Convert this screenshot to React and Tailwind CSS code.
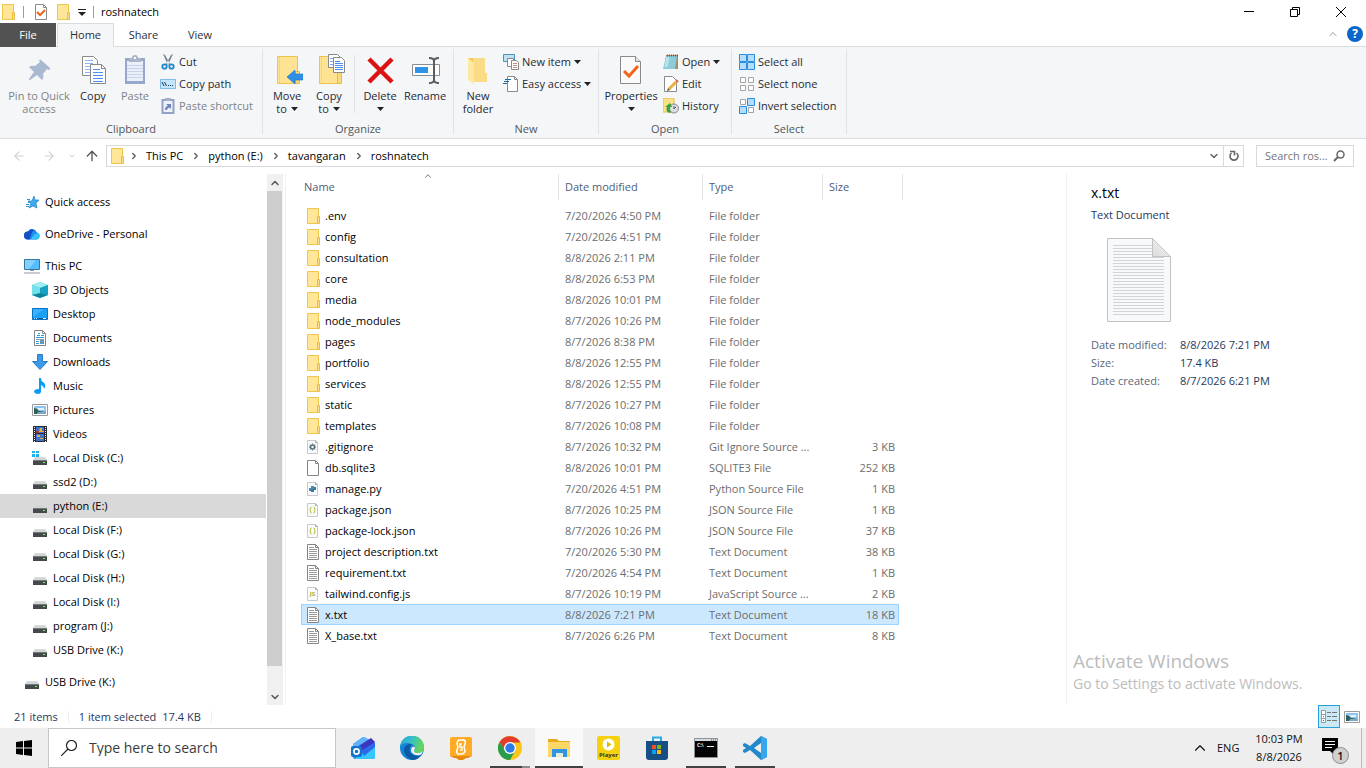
import { useState } from "react";
import { ChevronDown, ChevronRight, ChevronUp, ArrowLeft, ArrowRight, ArrowUp } from "lucide-react";

/* ---------- small icons ---------- */

function FolderIcon() {
  return (
    <svg width="14" height="16" viewBox="0 0 14 16" className="shrink-0">
      <path d="M.5.5h11v15H.5z" fill="#ffe699" stroke="#f0c54a" />
      <path d="M10.5 8.5h2v7h-2z" fill="#ffe08a" stroke="#e3bd47" />
    </svg>
  );
}

function PageIcon({ kind }) {
  const dark = kind === "text" || kind === "blank";
  return (
    <svg width="14" height="16" viewBox="0 0 14 16" className="shrink-0">
      <path
        d={dark ? "M.5.5h8l3 3v12H.5z" : "M.5 1.5h8l2 2v11H.5z"}
        fill={dark ? "#fff" : "#f8fafb"}
        stroke={dark ? "#858585" : "#c6cacd"}
      />
      <path d={dark ? "M8.5.5v3h3" : "M8.5 1.5v2h2"} fill="none" stroke={dark ? "#858585" : "#a9adb0"} />
      {kind === "text" && <path d="M2 3.5h5M2 5.5h8M2 7.5h8M2 9.5h8M2 11.5h8M2 13.5h8" stroke="#9a9a9a" />}
      {kind === "gear" && (
        <>
          <circle cx="5.5" cy="8" r="2" fill="none" stroke="#5b6f7b" strokeWidth="1.6" />
          <path d="M5.5 4.500v7M2 8h7" stroke="#5b6f7b" strokeDasharray="1 5" />
          <path d="M3 5.500l1 1M8 5.500l-1 1M3 10.500l1-1M8 10.500l-1-1" stroke="#5b6f7b" />
        </>
      )}
      {kind === "python" && (
        <>
          <path d="M4 5h3v3H4v2H2V7h2z" fill="#4b8bb0" />
          <path d="M4 11h3V9h2V6H7v2H4z" fill="#3b7799" />
        </>
      )}
      {kind === "json" && (
        <path
          d="M4.500 5q-1 0-1 1v1l-.8 1 .8 1v1q0 1 1 1M6.500 5q1 0 1 1v1l.8 1-.8 1v1q0 1-1 1"
          fill="none"
          stroke="#b9bd3e"
        />
      )}
      {kind === "js" && (
        <text x="5.5" y="10" fontSize="6" fontWeight="700" textAnchor="middle" fill="#a9ad2e">
          JS
        </text>
      )}
    </svg>
  );
}

function DriveIcon({ system }) {
  return (
    <svg width="16" height="16" viewBox="0 0 16 16" className="shrink-0">
      <path d="M3 7h10l2 3H1z" fill="#d4d7da" />
      {system && <path d="M0 1h3v2H0zM4 1h3v2H4zM0 4h3v3H0zM4 4h3v3H4z" fill="#19b5ea" />}
      <path d="M1 10h14v5H1z" fill="#45494c" />
      <path d="M1 10h14v1H1z" fill="#74797c" />
      <path d="M11 12h2v1h-2z" fill="#5dff5d" />
    </svg>
  );
}

function PictureIcon() {
  return (
    <svg width="16" height="16" viewBox="0 0 16 16" className="shrink-0">
      <path d="M.5 2.5h15v11H.5z" fill="#fff" stroke="#9b9b9b" />
      <path d="M2 4h12v8H2z" fill="#8fc4f0" />
      <path d="M5 6h7v2H7z" fill="#e6f3fd" />
      <path d="M2 6q3 0 5 3l7 1v2H2z" fill="#2f5f55" />
      <path d="M6 10h8v2H5z" fill="#7fa8c8" />
    </svg>
  );
}

function NavIcon({ name }) {
  if (name === "drive") return <DriveIcon />;
  if (name === "system") return <DriveIcon system />;
  if (name === "pictures") return <PictureIcon />;
  return (
    <svg width="16" height="16" viewBox="0 0 16 16" className="shrink-0">
      {name === "star" && (
        <>
          <path
            d="M10 2l1 4h4l-3 3 1 5-4-2-4 2 2-4-3-3h4z"
            fill="#3fa9ec"
            stroke="#1f84ca"
            strokeWidth=".7"
          />
          <path d="M3 5.5h3M4 8.5h2M2 10.5h3M2 12.5h3" stroke="#2b8fd4" />
        </>
      )}
      {name === "cloud" && (
        <>
          <path d="M4 13.500a4 4 0 010-8A5 5 0 0113 6.500a3.600 3.600 0 01-.5 7z" fill="#1f8df5" />
          <path d="M4 13.500A4 4 0 014 5.500Q7 2 10.500 4Q7 6 6 13.500z" fill="#1650c6" />
          <path d="M7 13.500Q10 7 14 7a3.500 3.500 0 01-1.500 6.500z" fill="#37c2fb" />
        </>
      )}
      {name === "pc" && (
        <>
          <path d="M.5 1.5h15v10H.5z" fill="#53bdfd" stroke="#37779d" />
          <path d="M1 2h11L5 11H1z" fill="#83d0ff" />
          <path d="M6 12.5h4M0 15h16" stroke="#8a98a8" />
        </>
      )}
      {name === "cube" && (
        <>
          <path d="M8 0l8 3v10l-8 3-8-3V3z" fill="#35c1d6" />
          <path d="M8 0l8 3-8 3-8-3z" fill="#a1edf1" />
          <path d="M0 3l8 3v6l-8 1z" fill="#74dfe9" />
          <path d="M8 6l8-3v10l-8-2z" fill="#16a2c5" />
          <path d="M0 13l8-2 8 2-8 3z" fill="#0d859c" />
        </>
      )}
      {name === "desktop" && (
        <>
          <path d="M.5 2.5h15v11H.5z" fill="#1aa0f5" stroke="#0873c4" />
          <path d="M12 3H1v8z" fill="#3cb2ff" />
          <path d="M1 12.5h14" stroke="#0a5f9f" />
          <path d="M2 12.5h1M4 12.5h1M11 12.5h3" stroke="#d9f0ff" />
        </>
      )}
      {name === "documents" && (
        <>
          <path d="M2.5.5h8l3 3v12h-11z" fill="#fff" stroke="#868686" />
          <path d="M10.5.5v3h3" fill="none" stroke="#868686" />
          <path d="M6 3.5h2M5 5.5h3M9 5.5h3M4 7.5h8M4 11.5h3M4 13.5h3" stroke="#2b9be0" />
          <path d="M4 9.5h8" stroke="#8d9aa5" />
          <path d="M8 10h4v4H8z" fill="#6a98b8" />
        </>
      )}
      {name === "downloads" && <path d="M5.5.5h5v7h5l-7.500 8-7.500-8h5z" fill="#3d9ae8" stroke="#2b7cc4" />}
      {name === "music" && (
        <path d="M7 0h2q0 3 2 4Q15 7 12 11q0-3-3-4v6q0 3-3 3t-4-2Q2 11 7 11z" fill="#0a9bf5" />
      )}
      {name === "videos" && (
        <>
          <path d="M1 0h14v16H1z" fill="#2c2c35" />
          <path d="M2.5 1v15M13.5 1v15" stroke="#eee" strokeDasharray="1 1" />
          <path d="M4 1h8v6H4zM4 8h8v7H4z" fill="#3d73c8" />
          <path d="M8 2h2v3h2v1H7zM5 9h3v2H5zM8 12h3v1H8z" fill="#e5b13c" />
          <path d="M4 5h3v2H4z" fill="#a63b2b" />
        </>
      )}
    </svg>
  );
}

function Caret() {
  return (
    <svg width="7" height="4" viewBox="0 0 7 4" className="inline-block shrink-0">
      <path d="M0 0h7L3.500 4z" fill="#222" />
    </svg>
  );
}

/* ---------- large ribbon icons ---------- */

function LargeIcon({ name }) {
  return (
    <svg width="32" height="32" viewBox="0 0 32 32" className="shrink-0">
      {name === "pin" && (
        <path
          d="M18 6l9 8q1 1-1 2l-2-1-4 5q1 4-1 6l-5-5-7 5H6v-1l5-7-5-5q2-2 6-1l5-4-1-2q1-1 2 0z"
          fill="#a9b9d1"
        />
      )}
      {name === "copy" && (
        <>
          <path d="M5.5 2.5h11l4 4v15h-15z" fill="#fff" stroke="#8a8a8a" />
          <path d="M8 6.5h8M8 9.5h8M8 12.5h8M8 15.5h8M8 18.5h8" stroke="#8ab6f4" />
          <path d="M13.5 10.5h11l4 4v15h-15z" fill="#fff" stroke="#8a8a8a" />
          <path d="M24.5 10.5v4h4" fill="none" stroke="#8a8a8a" />
          <path d="M16 15.5h7M16 18.5h10M16 21.5h10M16 24.5h10M16 27.5h10" stroke="#4a90f0" />
        </>
      )}
      {name === "paste" && (
        <>
          <path d="M6 4h20v26H6z" fill="#95a8cb" />
          <path d="M8 7h16v20H8z" fill="#eaf0fa" />
          <path d="M8 11.5h16M8 14.5h16M8 17.5h16M8 20.5h16M8 23.5h16" stroke="#c8d4ea" />
          <path d="M10 8V4h3q0-3 3-3t3 3h3v4z" fill="#aab5c6" />
          <path d="M15 3h2v2h-2z" fill="#fff" />
        </>
      )}
      {(name === "move" || name === "copyto") && (
        <>
          <path d="M6.5 2.5h20v27h-20z" fill="#ffe395" stroke="#efc44d" />
          <path d="M8.5 3v26" stroke="#f6d576" />
          <path d="M24.5 17.5h4v12h-4z" fill="#fbd978" stroke="#e5bb45" />
        </>
      )}
      {name === "move" && <path d="M16 23l8-7v4h8v6h-8v4z" fill="#2e8fe6" stroke="#1e76c6" strokeWidth=".6" />}
      {name === "copyto" && (
        <>
          <path d="M15.5.5h9l3 3v10h-12z" fill="#fff" stroke="#8a8a8a" />
          <path d="M17 4.5h7M17 7.5h7M17 10.5h3" stroke="#77aaf0" />
          <path d="M20.5 3.5h8l3 3v12h-11z" fill="#fff" stroke="#8a8a8a" />
          <path d="M22 7.5h5M22 9.5h8M22 11.5h8M22 13.5h8M22 15.5h8" stroke="#4a90f0" />
        </>
      )}
      {name === "delete" && <path d="M5 5l23 23M28 5L5 28" stroke="#dc1313" strokeWidth="4.5" />}
      {name === "rename" && (
        <>
          <path d="M3.5 10.5h27v11h-27z" fill="#fff" stroke="#8d8d8d" />
          <path d="M6 13h13v6H6z" fill="#2f94e8" />
          <path
            d="M20 4q5 0 5 3v19q0 3-5 3M30 4q-5 0-5 3v19q0 3 5 3"
            fill="none"
            stroke="#5c5c5c"
            strokeWidth="2"
          />
        </>
      )}
      {name === "folder" && (
        <>
          <path d="M6 4h17v15h2v9H10z" fill="#f3c95c" />
          <path d="M11 4h12v15h2v9H11z" fill="#fadc85" />
          <path d="M6 4l6 5v22l-4-4-2-1z" fill="#ffe7a4" />
        </>
      )}
      {name === "properties" && (
        <>
          <path d="M5.5 2.5h15l5 5v22h-20z" fill="#fafafa" stroke="#8a8a8a" />
          <path d="M20.5 2.5v5h5" fill="#e6e6e6" stroke="#8a8a8a" />
          <path d="M9 17l5 5 9-10" fill="none" stroke="#f2641b" strokeWidth="3" />
        </>
      )}
    </svg>
  );
}

function SmallIcon({ name }) {
  return (
    <svg width="16" height="16" viewBox="0 0 16 16" className="shrink-0">
      {name === "cut" && (
        <>
          <path d="M3 0l2 1 5 9-2 1zM13 0l-2 1-5 9 2 1z" fill="#74838f" />
          <circle cx="4.500" cy="12.500" r="2.200" fill="none" stroke="#1c87c9" strokeWidth="1.800" />
          <circle cx="11.500" cy="12.500" r="2.200" fill="none" stroke="#1c87c9" strokeWidth="1.800" />
        </>
      )}
      {name === "path" && (
        <>
          <path d="M.5 3.5h15v9H.5z" fill="#c4e5fb" stroke="#7fbbe3" />
          <path d="M2 6l2 4M4.500 6l2 4M8 9.5h1M10 9.5h1M12 9.5h1" stroke="#20394c" />
        </>
      )}
      {name === "shortcut" && (
        <>
          <path d="M2.500 2h11v13h-11z" fill="#edf2fa" stroke="#91a2c4" strokeWidth="2" />
          <path d="M5 0h6v3H5z" fill="#a5b0c5" />
          <path d="M5 12q0-4 3-4L6 6h5v5L9.500 9.500Q7 10 7 12z" fill="#7185b5" />
        </>
      )}
      {name === "newitem" && (
        <>
          <path d="M.5.5h11v7H.5z" fill="#bfe0f2" stroke="#4d93b8" />
          <path d="M4.5 4.5h6v8h-6z" fill="#fff" stroke="#8a8a8a" />
          <path d="M8.5 6.5h5l2 2v7h-7z" fill="#fff" stroke="#8a8a8a" />
          <path d="M10 9.5h4M10 11.5h4M10 13.5h4" stroke="#c58c7c" />
        </>
      )}
      {name === "easy" && (
        <>
          <path d="M4.5.5h7l3 3v12h-10z" fill="#fff" stroke="#8a8a8a" />
          <path d="M11.5.5v3h3" fill="none" stroke="#8a8a8a" />
          <path d="M2 3.5h6M1 5.5h5M0 7.5h4" stroke="#1c6aa4" />
        </>
      )}
      {name === "open" && (
        <>
          <path d="M3 1h12v14H2z" fill="#a58e60" />
          <path d="M3 2h11l-2 13H0z" fill="#8ccbd9" />
          <path d="M5 3l-2 10" stroke="#b9e4ed" strokeWidth="3" />
          <path d="M4 1.5h11" stroke="#53656a" strokeWidth="2" strokeDasharray="1 1" />
        </>
      )}
      {name === "edit" && (
        <>
          <path d="M1.5.5h8l4 4v11h-12z" fill="#fff" stroke="#8a8a8a" />
          <path d="M6 13l7-7" stroke="#eab13e" strokeWidth="3" />
          <path d="M4 15l1-3 2 2z" fill="#554" />
          <path d="M13 4l2 2" stroke="#db6155" strokeWidth="2" />
        </>
      )}
      {name === "history" && (
        <>
          <path d="M0 0h11v14H0z" fill="#fbe08a" stroke="#e5bd4c" />
          <circle cx="11" cy="10.500" r="4.500" fill="#d9dfe2" stroke="#808a91" />
          <path d="M11 8v3l2-2" fill="none" stroke="#555" />
          <path d="M7 15Q2 14 4 9H2l5-4 2 4H7q-1 3 1 5z" fill="#38a33b" />
        </>
      )}
      {name === "all" && (
        <path d="M.5.5h7v7h-7zM8.5.5h7v7h-7zM.5 8.5h7v7h-7zM8.5 8.5h7v7h-7z" fill="#b5dcfb" stroke="#278ee2" />
      )}
      {name === "none" && (
        <path d="M1.5 1.5h5v5h-5zM9.5 1.5h5v5h-5zM1.5 9.5h5v5h-5zM9.5 9.5h5v5h-5z" fill="#fff" stroke="#a5a5a5" />
      )}
      {name === "invert" && (
        <>
          <path d="M8.5.5h7v7h-7zM.5 8.5h7v7h-7z" fill="#b5dcfb" stroke="#278ee2" />
          <path d="M1.5 1.5h5v5h-5zM9.5 9.5h5v5h-5z" fill="#fff" stroke="#a5a5a5" />
        </>
      )}
    </svg>
  );
}

/* ---------- ribbon ---------- */

function BigButton({ icon, lines, caret, disabled, className }) {
  return (
    <button
      type="button"
      disabled={disabled}
      className={`flex flex-col items-center pt-[7px] leading-[13px] whitespace-nowrap ${
        disabled ? "text-[#7d838a]" : "text-[#262a33]"
      } ${className}`}
    >
      <LargeIcon name={icon} />
      <span className="mt-[3px]">{lines[0]}</span>
      <span className="flex h-[13px] items-center gap-1">
        {lines[1]}
        {caret && <Caret />}
      </span>
    </button>
  );
}

function SmallButton({ icon, label, caret, disabled }) {
  return (
    <button
      type="button"
      disabled={disabled}
      className={`flex h-[22px] items-center gap-[3px] whitespace-nowrap ${
        disabled ? "text-[#7d838a]" : "text-[#262a33]"
      }`}
    >
      <SmallIcon name={icon} />
      {label}
      {caret && <Caret />}
    </button>
  );
}

function Group({ label, className, children }) {
  return (
    <section className={`flex shrink-0 flex-col ${className}`}>
      <div className="flex flex-1">{children}</div>
      <div className="mb-px h-4 text-center leading-4 text-[#505660]">{label}</div>
    </section>
  );
}

const Divider = () => <div className="mt-[2px] mb-1 w-px shrink-0 bg-[#e0e2e4]" />;

function Ribbon() {
  return (
    <div className="flex h-[93px] overflow-hidden border-y border-[#dadbdc] bg-[#f5f6f7]">
      <Group label="Clipboard" className="w-[262px]">
        <BigButton icon="pin" lines={["Pin to Quick", "access"]} disabled className="ml-[3px] w-[72px]" />
        <BigButton icon="copy" lines={["Copy"]} className="w-9" />
        <BigButton icon="paste" lines={["Paste"]} disabled className="w-12" />
        <div className="flex flex-col items-start pt-1 pl-px">
          <SmallButton icon="cut" label="Cut" />
          <SmallButton icon="path" label="Copy path" />
          <SmallButton icon="shortcut" label="Paste shortcut" disabled />
        </div>
      </Group>
      <Divider />
      <Group label="Organize" className="w-[190px]">
        <BigButton icon="move" lines={["Move", "to"]} caret className="ml-[3px] w-[42px]" />
        <BigButton icon="copyto" lines={["Copy", "to"]} caret className="w-[42px]" />
        <div className="mx-1 my-2 w-px bg-[#e0e2e4]" />
        <BigButton icon="delete" lines={["Delete"]} caret className="w-[42px]" />
        <BigButton icon="rename" lines={["Rename"]} className="w-12" />
      </Group>
      <Divider />
      <Group label="New" className="w-36">
        <BigButton icon="folder" lines={["New", "folder"]} className="ml-1 w-10" />
        <div className="flex flex-col items-start pt-1 pl-[5px]">
          <SmallButton icon="newitem" label="New item" caret />
          <SmallButton icon="easy" label="Easy access" caret />
        </div>
      </Group>
      <Divider />
      <Group label="Open" className="w-[132px]">
        <BigButton icon="properties" lines={["Properties"]} caret className="ml-1 w-14" />
        <div className="flex flex-col items-start pt-1 pl-1">
          <SmallButton icon="open" label="Open" caret />
          <SmallButton icon="edit" label="Edit" />
          <SmallButton icon="history" label="History" />
        </div>
      </Group>
      <Divider />
      <Group label="Select" className="w-[114px]">
        <div className="flex flex-col items-start pt-1 pl-[7px]">
          <SmallButton icon="all" label="Select all" />
          <SmallButton icon="none" label="Select none" />
          <SmallButton icon="invert" label="Invert selection" />
        </div>
      </Group>
      <Divider />
    </div>
  );
}

function TitleBar() {
  return (
    <header className="flex h-[23px] items-center justify-between">
      <div className="flex items-center pl-[2px]">
        <FolderIcon />
        <span className="ml-[7px] h-3 w-px bg-[#9a9a9a]" />
        <button type="button" aria-label="Properties" className="ml-[10px]">
          <svg width="14" height="16" viewBox="0 0 14 16">
            <path d="M1.5.5h8l3 3v12h-11z" fill="#fff" stroke="#8c8c8c" />
            <path d="M9.5.5v3h3" fill="none" stroke="#8c8c8c" />
            <path d="M3 8l3 3 5-5" fill="none" stroke="#f2641b" strokeWidth="2" />
          </svg>
        </button>
        <button type="button" aria-label="New folder" className="ml-[9px]">
          <FolderIcon />
        </button>
        <button type="button" aria-label="Customize toolbar" className="ml-[7px]">
          <svg width="8" height="8" viewBox="0 0 8 8">
            <path d="M0 1.5h8" stroke="#222" />
            <path d="M0 4h8L4 8z" fill="#222" />
          </svg>
        </button>
        <span className="ml-[7px] h-3 w-px bg-[#9a9a9a]" />
        <h1 className="ml-[7px]">roshnatech</h1>
      </div>
      <div className="flex h-5 pr-[2px]">
        <button type="button" aria-label="Minimize" className="grid w-[46px] place-items-center">
          <svg width="10" height="10">
            <path d="M0 4.5h10" stroke="#000" />
          </svg>
        </button>
        <button type="button" aria-label="Restore" className="grid w-[46px] place-items-center">
          <svg width="10" height="10">
            <path d="M.5 2.5h7v7h-7zM2.5 2V.5h7v7H8" fill="none" stroke="#000" />
          </svg>
        </button>
        <button type="button" aria-label="Close" className="grid w-[46px] place-items-center">
          <svg width="10" height="10">
            <path d="M0 0l10 10M10 0L0 10" stroke="#000" />
          </svg>
        </button>
      </div>
    </header>
  );
}

function Tabs() {
  return (
    <nav className="relative z-10 -mb-px flex h-6 items-stretch text-[#2b3038]">
      <button type="button" className="w-14 bg-[#525252] text-white">
        File
      </button>
      <button type="button" className="ml-px w-[57px] border border-b-0 border-[#dadbdc] bg-[#f5f6f7] pb-[2px]">
        Home
      </button>
      <button type="button" className="w-[59px]">
        Share
      </button>
      <button type="button" className="w-[54px]">
        View
      </button>
      <div className="ml-auto flex items-center gap-2 pr-[3px] pb-[2px]">
        <ChevronUp size={12} className="text-[#999]" />
        <button
          type="button"
          aria-label="Help"
          className="grid size-4 place-items-center rounded-full bg-[#0a66c8] text-[12px] font-bold text-white"
        >
          ?
        </button>
      </div>
    </nav>
  );
}

function AddressBar() {
  const crumbs = ["This PC", "python (E:)", "tavangaran", "roshnatech"];
  return (
    <div className="flex h-[35px] items-center pr-3 pb-px">
      <div className="flex w-[106px] shrink-0 items-center pl-3">
        <button type="button" aria-label="Back">
          <ArrowLeft size={14} className="text-[#d0d0d0]" />
        </button>
        <button type="button" aria-label="Forward" className="ml-4">
          <ArrowRight size={14} className="text-[#d0d0d0]" />
        </button>
        <button type="button" aria-label="Recent" className="ml-3">
          <ChevronDown size={8} strokeWidth={3} className="text-[#c8c8c8]" />
        </button>
        <button type="button" aria-label="Up" className="ml-2">
          <ArrowUp size={16} className="text-[#555]" />
        </button>
      </div>
      <div className="flex h-[22px] flex-1 items-center border border-[#d9d9d9] pl-1">
        <FolderIcon />
        {crumbs.map((c) => (
          <span key={c} className="flex items-center">
            <ChevronRight size={10} className="mx-1 text-[#555]" strokeWidth={3} />
            <a href="#" className="pr-1 pl-[3px] leading-5">
              {c}
            </a>
          </span>
        ))}
        <button type="button" aria-label="Previous locations" className="ml-auto px-[3px]">
          <ChevronDown size={12} strokeWidth={3} className="text-[#666]" />
        </button>
        <button
          type="button"
          aria-label="Refresh"
          className="grid h-full w-5 place-items-center border-l border-[#d9d9d9]"
        >
          <svg width="12" height="12" viewBox="0 0 12 12">
            <path d="M8.500 3a4 4 0 11-5 0" fill="none" stroke="#666" strokeWidth="1.600" />
            <path d="M2 1.500h4.500v4" fill="none" stroke="#666" strokeWidth="1.600" />
          </svg>
        </button>
      </div>
      <label className="ml-3 flex h-[22px] w-[98px] items-center border border-[#d9d9d9] pl-2">
        <input
          aria-label="Search roshnatech"
          placeholder="Search ros..."
          className="w-[68px] outline-none placeholder:text-[#767676]"
        />
        <svg width="12" height="12" viewBox="0 0 12 12">
          <circle cx="7.500" cy="4.500" r="3.500" fill="none" stroke="#666" strokeWidth="1.500" />
          <path d="M5 7l-4 4" stroke="#666" strokeWidth="2" />
        </svg>
      </label>
    </div>
  );
}

/* ---------- navigation pane ---------- */

const drives = [
  ["3D Objects", "cube"],
  ["Desktop", "desktop"],
  ["Documents", "documents"],
  ["Downloads", "downloads"],
  ["Music", "music"],
  ["Pictures", "pictures"],
  ["Videos", "videos"],
  ["Local Disk (C:)", "system"],
  ["ssd2 (D:)", "drive"],
  ["python (E:)", "drive"],
  ["Local Disk (F:)", "drive"],
  ["Local Disk (G:)", "drive"],
  ["Local Disk (H:)", "drive"],
  ["Local Disk (I:)", "drive"],
  ["program (J:)", "drive"],
  ["USB Drive (K:)", "drive"],
];

function NavItem({ label, icon, child, active }) {
  return (
    <a
      href="#"
      className={`flex h-6 shrink-0 items-center gap-[5px] ${child ? "pl-8" : "pl-6"} ${active ? "bg-[#d9d9d9]" : ""}`}
    >
      <NavIcon name={icon} />
      {label}
    </a>
  );
}

function Sidebar() {
  return (
    <aside className="flex w-[286px] shrink-0 border-r border-[#f0f0f0]">
      <nav className="flex flex-1 flex-col gap-2 overflow-hidden pt-4">
        <NavItem label="Quick access" icon="star" />
        <NavItem label="OneDrive - Personal" icon="cloud" />
        <div>
          <NavItem label="This PC" icon="pc" />
          {drives.map(([label, icon]) => (
            <NavItem key={label} label={label} icon={icon} child active={label === "python (E:)"} />
          ))}
        </div>
        <NavItem label="USB Drive (K:)" icon="drive" />
      </nav>
      <div className="mr-[2px] ml-px flex w-4 flex-col bg-[#f0f0f0]">
        <button type="button" aria-label="Scroll up" className="grid h-[17px] place-items-center">
          <ChevronUp size={12} strokeWidth={3} className="text-[#555]" />
        </button>
        <div className="mr-px flex-1 bg-[#cdcdcd]" />
        <div className="h-[22px]" />
        <button type="button" aria-label="Scroll down" className="grid h-[17px] place-items-center">
          <ChevronDown size={12} strokeWidth={3} className="text-[#555]" />
        </button>
      </div>
    </aside>
  );
}

/* ---------- file list ---------- */

const files = [
  [".env", "7/20/2026 4:50 PM", "File folder", "", "folder"],
  ["config", "7/20/2026 4:51 PM", "File folder", "", "folder"],
  ["consultation", "8/8/2026 2:11 PM", "File folder", "", "folder"],
  ["core", "8/8/2026 6:53 PM", "File folder", "", "folder"],
  ["media", "8/8/2026 10:01 PM", "File folder", "", "folder"],
  ["node_modules", "8/7/2026 10:26 PM", "File folder", "", "folder"],
  ["pages", "8/7/2026 8:38 PM", "File folder", "", "folder"],
  ["portfolio", "8/8/2026 12:55 PM", "File folder", "", "folder"],
  ["services", "8/8/2026 12:55 PM", "File folder", "", "folder"],
  ["static", "8/7/2026 10:27 PM", "File folder", "", "folder"],
  ["templates", "8/7/2026 10:08 PM", "File folder", "", "folder"],
  [".gitignore", "8/7/2026 10:32 PM", "Git Ignore Source ...", "3 KB", "gear"],
  ["db.sqlite3", "8/8/2026 10:01 PM", "SQLITE3 File", "252 KB", "blank"],
  ["manage.py", "7/20/2026 4:51 PM", "Python Source File", "1 KB", "python"],
  ["package.json", "8/7/2026 10:25 PM", "JSON Source File", "1 KB", "json"],
  ["package-lock.json", "8/7/2026 10:26 PM", "JSON Source File", "37 KB", "json"],
  ["project description.txt", "7/20/2026 5:30 PM", "Text Document", "38 KB", "text"],
  ["requirement.txt", "7/20/2026 4:54 PM", "Text Document", "1 KB", "text"],
  ["tailwind.config.js", "8/7/2026 10:19 PM", "JavaScript Source ...", "2 KB", "js"],
  ["x.txt", "8/8/2026 7:21 PM", "Text Document", "18 KB", "text"],
  ["X_base.txt", "8/7/2026 6:26 PM", "Text Document", "8 KB", "text"],
];

function FileList() {
  const [selected, setSelected] = useState("x.txt");

  return (
    <main className="min-w-0 flex-1 overflow-hidden pl-[15px]">
      <table className="w-[602px] table-fixed border-separate border-spacing-0 text-left">
        <colgroup>
          <col className="w-[258px]" />
          <col className="w-36" />
          <col className="w-[120px]" />
          <col className="w-[76px]" />
          <col className="w-1" />
        </colgroup>
        <thead className="text-[#4c607a]">
          <tr className="h-[26px]">
            <th className="relative border-r border-[#e5e5e5] p-0 pl-[3px] font-normal">
              Name
              <ChevronUp size={10} className="absolute -top-[3px] left-[122px] text-[#555]" />
            </th>
            <th className="border-r border-[#e5e5e5] p-0 pl-[6px] font-normal">Date modified</th>
            <th className="border-r border-[#e5e5e5] p-0 pl-[6px] font-normal">Type</th>
            <th colSpan={2} className="border-r border-[#e5e5e5] p-0 pl-[6px] font-normal">
              Size
            </th>
          </tr>
        </thead>
        <tbody>
          <tr className="h-[5px]">
            <td colSpan={5} className="p-0" />
          </tr>
          {files.map(([name, date, type, size, kind]) => {
            const cell =
              name === selected ? "border-y border-[#99d1ff] bg-[#cce8ff]" : "border-y border-transparent";
            return (
              <tr key={name} onClick={() => setSelected(name)} className="h-[21px] leading-4 text-[#6d6d6d]">
                <td className={`${cell} border-l p-0 pl-[5px] text-black`}>
                  <div className="flex items-center gap-1">
                    {kind === "folder" ? <FolderIcon /> : <PageIcon kind={kind} />}
                    {name}
                  </div>
                </td>
                <td className={`${cell} p-0 pl-[6px]`}>{date}</td>
                <td className={`${cell} p-0 pl-[6px] whitespace-nowrap`}>{type}</td>
                <td className={`${cell} border-r p-0 pr-[3px] text-right`}>{size}</td>
                <td className="p-0" />
              </tr>
            );
          })}
        </tbody>
      </table>
    </main>
  );
}

function Preview() {
  const lines = Array.from({ length: 24 }, (_, i) => 7.5 + i * 3);
  return (
    <aside className="relative w-[300px] shrink-0 border-l border-[#f0f0f0] pt-2 pl-6 text-[#1e395b]">
      <h2 className="text-[14px] leading-[22px] text-black">x.txt</h2>
      <p className="leading-[22px]">Text Document</p>
      <svg width="64" height="84" viewBox="0 0 64 84" className="mt-3 ml-4">
        <defs>
          <linearGradient id="fold" x1="0" y1="1" x2="1" y2="0">
            <stop offset="0" stopColor="#dcdcdc" />
            <stop offset="1" stopColor="#f4f4f4" />
          </linearGradient>
        </defs>
        <path d="M.5.5h45l18 18v65H.5z" fill="#f7f9fa" stroke="#bfc3c5" />
        {lines.map((y) => (
          <path key={y} d={`M6 ${y}h${y < 19 ? 39 : 51}`} stroke="#d2d5d7" />
        ))}
        <path d="M45.5.5v18h18z" fill="url(#fold)" stroke="#bfc3c5" />
      </svg>
      <dl className="mt-[14px] grid grid-cols-[89px_1fr] leading-[18px]">
        <dt className="text-[#5a6779]">Date modified:</dt>
        <dd>8/8/2026 7:21 PM</dd>
        <dt className="text-[#5a6779]">Size:</dt>
        <dd>17.4 KB</dd>
        <dt className="text-[#5a6779]">Date created:</dt>
        <dd>8/7/2026 6:21 PM</dd>
      </dl>
      {/* watermark floats over the pane */}
      <div className="pointer-events-none absolute bottom-[10px] left-[6px] whitespace-nowrap text-[#bcbcbc]">
        <p className="text-[19px] leading-6">Activate Windows</p>
        <p className="text-[14px] leading-[22px]">Go to Settings to activate Windows.</p>
      </div>
    </aside>
  );
}

function StatusBar() {
  return (
    <footer className="flex h-[23px] items-center pl-[14px] text-[#1e395b]">
      <span>21 items</span>
      <span className="ml-[10px] h-3 w-px bg-[#eee]" />
      <span className="ml-[10px]">1 item selected</span>
      <span className="ml-[6px]">17.4 KB</span>
      <span className="ml-[10px] h-3 w-px bg-[#eee]" />
      <div className="ml-auto flex h-full items-center gap-1 pr-[6px]">
        <button
          type="button"
          aria-label="Details"
          className="grid h-full w-[22px] place-items-center border border-[#26a0da] bg-[#cbe8f6]"
        >
          <svg width="16" height="13" viewBox="0 0 16 13">
            <path d="M.5.5h4v12h-4zM.5 4.5h4M.5 8.5h4" fill="#fff" stroke="#999" />
            <path d="M2 6.5h1" stroke="#2b7cd0" />
            <path d="M2 10.5h1" stroke="#d02b2b" />
            <path d="M6 2.5h4M11 2.5h5M6 6.5h4M11 6.5h5M6 10.5h4M11 10.5h5" stroke="#777" />
          </svg>
        </button>
        <button type="button" aria-label="Large icons">
          <PictureIcon />
        </button>
      </div>
    </footer>
  );
}

/* ---------- taskbar ---------- */

function AppIcon({ name }) {
  return (
    <svg width="24" height="24" viewBox="0 0 24 24">
      {name === "outlook" && (
        <>
          <path d="M2 8L12 1l3 1 9 6v13q0 2-2 2H4q-2 0-2-2z" fill="#2b8cf0" />
          <path d="M2 8L13 1l6 3-15 10H2z" fill="#5fb4fb" />
          <path d="M6 11L20 2l4 4-12 9z" fill="#3b35c4" />
          <path d="M12 14l12-7v14q0 2-2 2H4z" fill="#37c6fb" />
          <path d="M10 15l14-9v5L13 20z" fill="#2b6ae6" />
          <rect x="0" y="10" width="11" height="11" rx="2" fill="#1272d2" />
          <circle cx="5.500" cy="15.500" r="2.600" fill="none" stroke="#fff" strokeWidth="1.600" />
        </>
      )}
      {name === "edge" && (
        <>
          <defs>
            <linearGradient id="edgeTop" x1="0" y1="0" x2="1" y2=".3">
              <stop offset="0" stopColor="#2a9fe0" />
              <stop offset=".5" stopColor="#35c1c8" />
              <stop offset="1" stopColor="#66d45a" />
            </linearGradient>
          </defs>
          <circle cx="12" cy="12" r="12" fill="#1484d4" />
          <path d="M0 11A12 12 0 0124 12q0 5-6 5-4 0-4-2 2-2 1-4-2-4-8-4-5 0-7 4z" fill="url(#edgeTop)" />
          <path d="M9 8q-6 2-5 8 2 6 8 8 6 0 9-5-4 2-8 0-5-3-3-8 1-2 2-3z" fill="#0c59a4" />
          <path d="M12 11q3-1 3 1 0 1-1 3 0 2 4 2 3 0 5-2-1 3-3 4-5 1-8-2-2-3 0-6z" fill="#eeeeee" />
        </>
      )}
      {name === "scratch" && (
        <>
          <path d="M3 2h18q2 0 2 2v16l-4 2h-2l-3 2h-4l-3-2H5l-4-2V4q0-2 2-2z" fill="#e8890c" />
          <path d="M3 1h18q2 0 2 2v17H1V3q0-2 2-2z" fill="#ffab26" />
          <path d="M10 4h5q2 1 1 4l-1 3 1 3q0 4-4 4H9q-2-1-1-4l1-3-1-3q0-3 2-4z" fill="none" stroke="#fff" strokeWidth="1.500" />
          <path d="M13 8h-2v3h2v3h-2" fill="none" stroke="#fff" strokeWidth="1.300" />
        </>
      )}
      {name === "chrome" && (
        <>
          <circle cx="12" cy="12" r="12" fill="#f9c61b" />
          <path d="M1.600 6A12 12 0 0122.400 6.500H12L7 15z" fill="#e33b2e" />
          <path d="M1.600 6A12 12 0 0012 24l5-9-5 2-5-2z" fill="#249e4b" />
          <circle cx="12" cy="12" r="6" fill="#fff" />
          <circle cx="12" cy="12" r="4.700" fill="#2c7be8" />
        </>
      )}
      {name === "explorer" && (
        <>
          <path d="M1 3h9l2 2h11v16H1z" fill="#e8aa22" />
          <path d="M1 6h22v15H1z" fill="#ffd766" />
          <path d="M5 13h15v8h-4v-4H9v4H5z" fill="#3096df" />
          <path d="M9 17h7v4H9z" fill="#e5ecdc" />
        </>
      )}
      {name === "player" && (
        <>
          <rect x="1" y="0" width="23" height="24" rx="2" fill="#f5d20f" />
          <circle cx="12.500" cy="8.500" r="6" fill="#fff" />
          <path d="M11 5.500l4.500 3-4.500 3z" fill="#e0b900" />
          <text x="12.5" y="21" fontSize="6" fontWeight="700" textAnchor="middle" fill="#333">
            Player
          </text>
        </>
      )}
      {name === "store" && (
        <>
          <path d="M8 6V1.500h8V6" fill="none" stroke="#29a9e5" strokeWidth="2" />
          <path d="M1 5h22v16q0 3-3 3H4q-3 0-3-3z" fill="#174f85" />
          <path d="M7 9h4v4H7z" fill="#f25022" />
          <path d="M12 9h4v4h-4z" fill="#7fba00" />
          <path d="M7 14h4v4H7z" fill="#00a4ef" />
          <path d="M12 14h4v4h-4z" fill="#ffb900" />
        </>
      )}
      {name === "cmd" && (
        <>
          <path d="M.5 2.500h23v19H.5z" fill="#050505" stroke="#8e9295" />
          <path d="M1 3h22v2H1z" fill="#d7dbde" />
          <path d="M17 4h1M19 4h1M21 4h1" stroke="#555" />
          <text x="3" y="11" fontSize="5" fontWeight="700" fill="#eee">
            C:\
          </text>
          <path d="M13 10.5h7" stroke="#eee" />
        </>
      )}
      {name === "vscode" && (
        <>
          <path d="M18 0l6 3v18l-6 3L7 14l-5 3-2-1V8l2-1 5 3z" fill="#2489ca" />
          <path d="M18 7v10l-7-5z" fill="#eee" />
          <path d="M0 10v4l3-2z" fill="#eee" />
          <path d="M18 0l6 3v18l-6 3z" fill="#35a7ee" />
        </>
      )}
    </svg>
  );
}

const apps = [
  { name: "outlook" },
  { name: "edge" },
  { name: "scratch" },
  { name: "chrome", open: true },
  { name: "explorer", active: true },
  { name: "player" },
  { name: "store" },
  { name: "cmd", open: true },
  { name: "vscode", open: true },
];

function Taskbar() {
  return (
    <div className="flex h-10 items-stretch bg-[#eeeeee] text-[#111]">
      <button type="button" aria-label="Start" className="grid w-12 place-items-center">
        <svg width="16" height="16" viewBox="0 0 16 16">
          <path d="M0 2l7-1v6.500H0zM8 1l8-1v7.500H8zM0 8.500h7V15l-7-1zM8 8.500h8V16l-8-1z" fill="#000" />
        </svg>
      </button>
      <label className="flex w-72 items-center gap-3 border border-[#c6c6c6] bg-white pl-3">
        <svg width="16" height="16" viewBox="0 0 16 16" className="shrink-0">
          <circle cx="10.500" cy="5.500" r="5" fill="none" stroke="#222" strokeWidth="1.200" />
          <path d="M7 9l-7 7" stroke="#222" strokeWidth="1.200" />
        </svg>
        <input
          aria-label="Type here to search"
          placeholder="Type here to search"
          className="w-full text-[14px] outline-none placeholder:text-[#3c3c3c]"
        />
      </label>
      <div className="ml-[3px] flex gap-px">
        {apps.map(({ name, open, active }) => (
          <button
            key={name}
            type="button"
            aria-label={name}
            className={`flex w-12 flex-col items-center ${active ? "bg-[#f9f9f9]" : ""}`}
          >
            <span className="grid flex-1 place-items-center pt-[2px]">
              <AppIcon name={name} />
            </span>
            <span
              className={`flex h-[2px] justify-end ${active ? "w-full bg-[#424242]" : "w-10"} ${open ? "bg-[#424242]" : ""}`}
            >
              {name === "chrome" && <span className="w-2 bg-[#8c8c8c]" />}
            </span>
          </button>
        ))}
      </div>
      <div className="ml-auto flex items-center">
        <ChevronUp size={18} strokeWidth={1.5} />
        <span className="ml-2 w-6">ENG</span>
        <time className="ml-2 w-[60px] text-center leading-[18px]">
          <span className="block">10:03 PM</span>
          <span className="block">8/8/2026</span>
        </time>
        <button type="button" aria-label="Notifications" className="relative ml-3 h-full w-7">
          <svg width="26" height="26" viewBox="0 0 26 26" className="mt-1">
            <path d="M1 1h16v13h-4v4l-4-4H1z" fill="#000" />
            <path d="M4 4.5h10M4 7.5h10M4 10.5h7" stroke="#fff" />
          </svg>
          <span className="absolute right-0 bottom-1 grid size-[17px] place-items-center rounded-full border border-[#8c8c8c] bg-[#d0d0d0] font-semibold">
            1
          </span>
        </button>
        <span className="ml-3 h-full w-px bg-[#bdbdbd]" />
        <span className="w-1" />
      </div>
    </div>
  );
}

export default function App() {
  return (
    <div className="flex min-h-screen flex-col bg-white font-['Open_Sans','Noto_Sans',sans-serif] text-[11px] leading-4 text-black">
      <TitleBar />
      <Tabs />
      <Ribbon />
      <AddressBar />
      <div className="flex flex-1">
        <Sidebar />
        <FileList />
        <Preview />
      </div>
      <StatusBar />
      <Taskbar />
    </div>
  );
}
